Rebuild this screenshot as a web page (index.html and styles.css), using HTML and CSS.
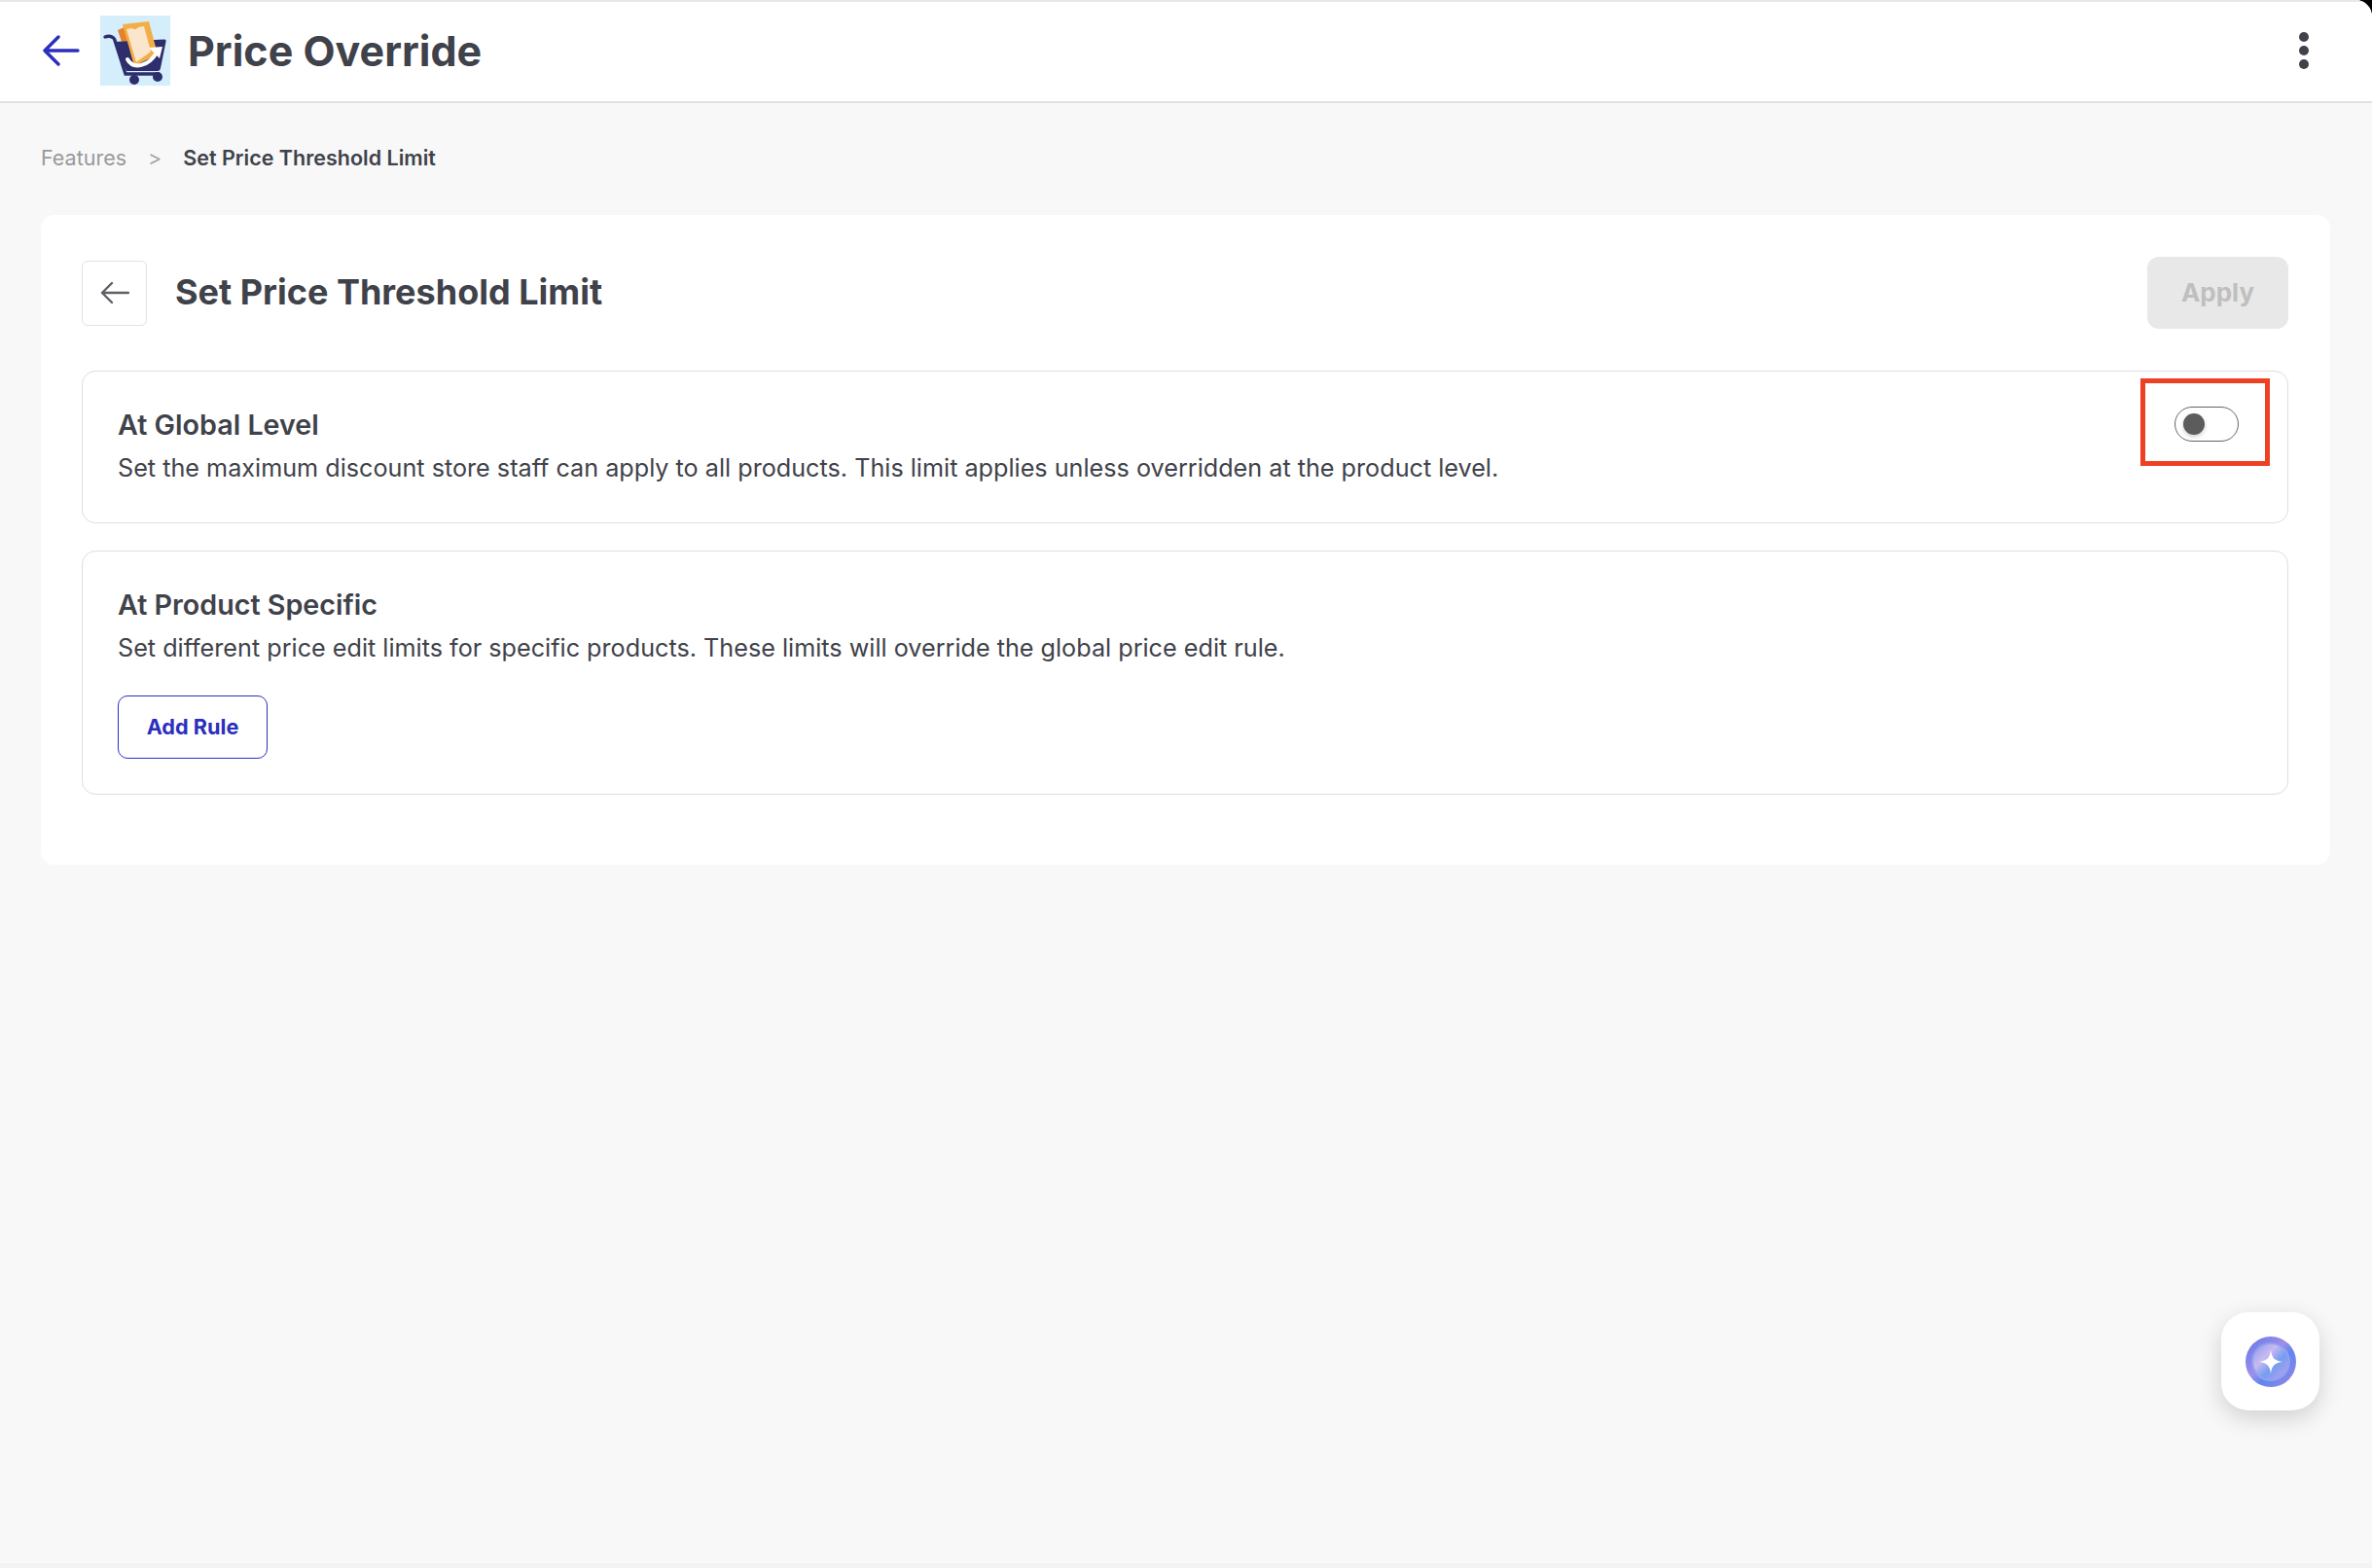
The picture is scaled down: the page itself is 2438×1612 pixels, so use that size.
FILE: index.html
```html
<!DOCTYPE html>
<html lang="en">
<head>
<meta charset="utf-8">
<title>Price Override</title>
<link rel="stylesheet" href="styles.css">
</head>
<body>
<div class="app">
  <header class="topbar">
    <svg class="top-back" viewBox="0 0 38 32" fill="none" stroke="#2b2fbd" stroke-width="3.4" stroke-linecap="round" stroke-linejoin="round"><path d="M2 16H36M16 2L2 16L16 30"/></svg>
    <svg class="logo" viewBox="0 0 72 72">
      <rect width="72" height="72" fill="#d5eefc"/>
      <path d="M18 15L27 11L40 50L30 52Z" fill="#e8812f"/>
      <path d="M5 22C9 20.500 13 21.500 14.500 24L26 60H60" fill="none" stroke="#2e2e6c" stroke-width="3.4" stroke-linecap="round"/>
      <path d="M14 27L66 24.500Q68 24.500 67.500 27L62 54Q61.500 57 59 57H27Z" fill="#2e2e6c"/>
      <path d="M23 9L50 6L59 40L35 52Z" fill="#f3ae45"/>
      <path d="M27 14L33 13Q36 16 39 12L45 11L52 37L37 48Z" fill="#f9e6cc"/>
      <path d="M28 45C34 56 50 52 58 38" fill="none" stroke="#fff" stroke-width="4" stroke-linecap="round"/>
      <path d="M50 33L64 32L61 44Z" fill="#fff"/>
      <circle cx="35" cy="66" r="5" fill="#2e2e6c"/>
      <circle cx="59" cy="63" r="5" fill="#2e2e6c"/>
    </svg>
    <h1 class="app-title">Price Override</h1>
    <div class="kebab"><i></i><i></i><i></i></div>
  </header>

  <main class="content">
    <nav class="crumbs">
      <span class="crumb-link">Features</span>
      <span class="crumb-sep">&gt;</span>
      <span class="crumb-current">Set Price Threshold Limit</span>
    </nav>

    <section class="card">
      <div class="card-head">
        <button class="icon-btn">
          <svg class="back-arrow" viewBox="0 0 30 24" fill="none" stroke="#5f6064" stroke-width="2.400" stroke-linecap="round" stroke-linejoin="round"><path d="M2 12H29M12 2L2 12L12 22"/></svg>
        </button>
        <h2 class="card-title">Set Price Threshold Limit</h2>
        <button class="apply-btn">Apply</button>
      </div>

      <div class="panel panel-global">
        <div class="panel-text">
          <h3 class="panel-title">At Global Level</h3>
          <p class="panel-desc">Set the maximum discount store staff can apply to all products. This limit applies unless overridden at the product level.</p>
        </div>
        <div class="toggle"><span class="knob"></span></div>
        <div class="highlight"></div>
      </div>

      <div class="panel panel-product">
        <div class="panel-text">
          <h3 class="panel-title">At Product Specific</h3>
          <p class="panel-desc">Set different price edit limits for specific products. These limits will override the global price edit rule.</p>
        </div>
        <button class="outline-btn">Add Rule</button>
      </div>
    </section>
  </main>

  <button class="fab">
    <svg class="fab-icon" viewBox="0 0 52 52">
      <defs>
        <linearGradient id="ringGrad" x1="0" y1="0" x2="1" y2="1">
          <stop offset="0" stop-color="#5f78ea"/>
          <stop offset="0.45" stop-color="#a08fe8"/>
          <stop offset="0.6" stop-color="#5f86ee"/>
          <stop offset="1" stop-color="#9c86e6"/>
        </linearGradient>
        <linearGradient id="innerGrad" x1="0" y1="0" x2="1" y2="1">
          <stop offset="0" stop-color="#8a9aee"/>
          <stop offset="0.35" stop-color="#c9baf0"/>
          <stop offset="0.6" stop-color="#769cf0"/>
          <stop offset="1" stop-color="#bda4ec"/>
        </linearGradient>
      </defs>
      <circle cx="26" cy="26" r="26" fill="url(#ringGrad)"/>
      <circle cx="26" cy="26" r="20" fill="#8fa0f2"/>
      <circle cx="26" cy="26" r="18" fill="url(#innerGrad)"/>
      <path d="M26 14C27 22 30 25 38 26C30 27 27 30 26 38C25 30 22 27 14 26C22 25 25 22 26 14Z" fill="#fff"/>
    </svg>
  </button>
</div>
</body>
</html>
```
FILE: styles.css
```css
* { box-sizing: border-box; }
html, body { margin: 0; height: 100%; background: #000; }
body { font-family: Inter, "Noto Sans", sans-serif; color: #3f424a; }
h1, h2, h3, p { margin: 0; }
button { font-family: inherit; cursor: pointer; }

.app {
  position: relative;
  height: 1612px;
  background: #f8f8f8;
  border-top-right-radius: 17px;
  border-bottom: 5px solid #f3f3f3;
  overflow: hidden;
}

.topbar {
  display: flex;
  align-items: center;
  height: 106px;
  padding: 0 65px 2px 44px;
  background: #fff;
  border-top: 2px solid #e8e8e8;
  border-bottom: 2px solid #e1e1e1;
}
.top-back { width: 38px; height: 32px; }
.logo { width: 72px; height: 72px; margin-left: 21px; }
.app-title {
  margin-left: 18px;
  font-size: 43px;
  line-height: 54px;
  font-weight: 700;
}
.kebab {
  margin-left: auto;
  display: flex;
  flex-direction: column;
  gap: 4px;
}
.kebab i {
  width: 10px;
  height: 10px;
  border-radius: 50%;
  background: #3f424a;
}

.content { padding: 42px 43px 0 42px; }
.crumbs {
  display: flex;
  align-items: center;
  height: 28px;
  font-size: 21.500px;
}
.crumb-link { color: #98999b; }
.crumb-sep { margin: 0 22px; color: #a3a4a6; }
.crumb-current { font-weight: 600; }

.card {
  margin-top: 45px;
  height: 668px;
  padding: 43px 43px 0 42px;
  background: #fff;
  border-radius: 14px;
}
.card-head {
  display: flex;
  align-items: center;
  height: 74px;
}
.icon-btn {
  display: flex;
  align-items: center;
  justify-content: center;
  width: 67px;
  height: 67px;
  padding: 0;
  background: #fff;
  border: 1px solid #e2e2e2;
  border-radius: 6px;
}
.back-arrow { width: 30px; height: 24px; }
.card-title {
  margin-left: 29px;
  padding-bottom: 2px;
  font-size: 36px;
  line-height: 46px;
  font-weight: 700;
}
.apply-btn {
  margin-left: auto;
  width: 145px;
  height: 74px;
  padding-bottom: 3px;
  background: #e8e8e8;
  border: 0;
  border-radius: 12px;
  color: #bfbfbf;
  font-size: 26px;
  font-weight: 700;
}

.panel {
  position: relative;
  margin-top: 43px;
  padding: 36px 37px 36px 36px;
  background: #fff;
  border: 1px solid #dedede;
  border-radius: 14px;
}
.panel-global {
  display: flex;
  justify-content: space-between;
  height: 157px;
}
.panel-product {
  margin-top: 28px;
  height: 251px;
}
.panel-title {
  font-size: 28.700px;
  line-height: 38px;
  font-weight: 600;
}
.panel-desc {
  margin-top: 7px;
  font-size: 25.200px;
  line-height: 36px;
  font-weight: 400;
}

.toggle {
  position: relative;
  display: flex;
  align-items: center;
  flex: none;
  width: 66px;
  height: 36px;
  margin-right: 13px;
  padding-left: 8px;
  background: #fff;
  border: 1px solid #646464;
  border-radius: 18px;
}
.knob {
  width: 22px;
  height: 22px;
  border-radius: 50%;
  background: #5c5c5c;
  box-shadow: 0 2px 4px rgba(0, 0, 0, 0.2);
}
.highlight {
  position: absolute;
  top: 7px;
  right: 18px;
  width: 133px;
  height: 90px;
  border: 5px solid #ee4023;
}

.outline-btn {
  display: block;
  width: 154px;
  height: 65px;
  margin-top: 31px;
  padding-bottom: 2px;
  background: #fff;
  border: 1px solid #2b2fbd;
  border-radius: 10px;
  color: #2b2fbd;
  font-size: 21.700px;
  font-weight: 700;
}

.fab {
  position: absolute;
  left: 2283px;
  top: 1349px;
  display: flex;
  align-items: center;
  justify-content: center;
  width: 101px;
  height: 101px;
  padding: 0;
  background: #fff;
  border: 0;
  border-radius: 28px;
  box-shadow: 0 8px 24px rgba(0, 0, 0, 0.16);
}
.fab-icon { width: 52px; height: 52px; }
```
